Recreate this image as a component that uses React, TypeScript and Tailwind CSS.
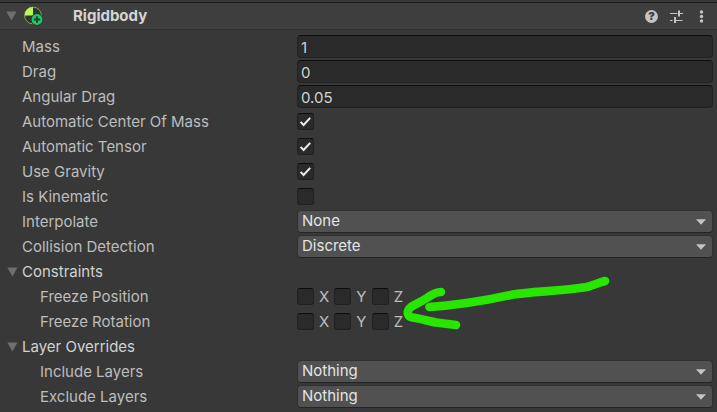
import { useId, useState, type ReactNode } from "react";

function Foldout({ className }: { className?: string }) {
  return (
    <svg width="11" height="10" viewBox="0 0 11 10" className={className} aria-hidden="true">
      <path d="M0.3 0.5h10.2L5.4 9.6z" fill="#6f6f6f" />
    </svg>
  );
}

function Row({ label, indent, children }: { label: string; indent?: boolean; children: (id: string) => ReactNode }) {
  const id = useId();
  return (
    <div className="flex h-[25px] items-center pr-1">
      <label htmlFor={id} className={`w-[297px] shrink-0 ${indent ? "pl-10" : "pl-[22px]"}`}>
        {label}
      </label>
      {children(id)}
    </div>
  );
}

function NumberRow({ label, value }: { label: string; value: string }) {
  return (
    <Row label={label}>
      {(id) => (
        <input
          id={id}
          type="text"
          inputMode="decimal"
          defaultValue={value}
          className="h-[23px] min-w-0 flex-1 rounded-[4px] border border-[#212121] border-t-[#0d0d0d] bg-[#2a2a2a] px-[3px] pt-0.5 text-[#d2d2d2] outline-none"
        />
      )}
    </Row>
  );
}

function Checkbox({ id, checked = false }: { id: string; checked?: boolean }) {
  const [on, setOn] = useState(checked);
  return (
    <span className="relative flex size-[17px] shrink-0">
      <input
        id={id}
        type="checkbox"
        checked={on}
        onChange={() => setOn(!on)}
        className="size-[17px] appearance-none rounded-[3px] border border-[#212121] border-t-[#0d0d0d] bg-[#2a2a2a]"
      />
      {on && (
        <svg viewBox="0 0 17 17" className="pointer-events-none absolute inset-0 size-[17px]" aria-hidden="true">
          <path d="M3.6 8.9l3 3.1L13.2 4.900" fill="none" stroke="#ececec" strokeWidth="2" />
        </svg>
      )}
    </span>
  );
}

function ToggleRow({ label, checked }: { label: string; checked?: boolean }) {
  return <Row label={label}>{(id) => <Checkbox id={id} checked={checked} />}</Row>;
}

function SelectRow({ label, options, indent }: { label: string; options: string[]; indent?: boolean }) {
  return (
    <Row label={label} indent={indent}>
      {(id) => (
        <div className="relative flex min-w-0 flex-1">
          <select
            id={id}
            className="h-[23px] w-full appearance-none rounded-[4px] border border-[#303030] border-b-[#242424] bg-[#515151] pr-6 pb-0.5 pl-1 text-[#e4e4e4] outline-none"
          >
            {options.map((o) => (
              <option key={o}>{o}</option>
            ))}
          </select>
          <svg width="10" height="6" viewBox="0 0 10 6" className="pointer-events-none absolute top-[9px] right-[7px]" aria-hidden="true">
            <path d="M0 0.3h10L5 5.8z" fill="#c4c4c4" />
          </svg>
        </div>
      )}
    </Row>
  );
}

function AxisRow({ label }: { label: string }) {
  const id = useId();
  return (
    <div role="group" aria-labelledby={id} className="flex h-[25px] items-center">
      <span id={id} className="w-[297px] shrink-0 pl-10">
        {label}
      </span>
      <div className="grid w-[112px] grid-cols-3">
        {["X", "Y", "Z"].map((axis) => (
          <div key={axis} className="flex items-center gap-[5px]">
            <Checkbox id={id + axis} />
            <label htmlFor={id + axis}>{axis}</label>
          </div>
        ))}
      </div>
    </div>
  );
}

function Section({ title, children }: { title: string; children: ReactNode }) {
  const [open, setOpen] = useState(true);
  return (
    <section>
      <button type="button" aria-expanded={open} onClick={() => setOpen(!open)} className="flex h-[25px] w-full items-center gap-1 pl-[7px] text-left text-[#d2d2d2]">
        <Foldout />
        {title}
      </button>
      {open && children}
    </section>
  );
}

function Header() {
  return (
    <header className="flex h-7 items-center border-t border-b border-t-[#1a1a1a] border-b-[#303030] bg-[#3e3e3e] pr-[9px] pl-1.5">
      <button type="button" aria-label="Collapse Rigidbody">
        <Foldout />
      </button>
      <svg width="20" height="20" viewBox="0 0 20 20" className="ml-[7px]" aria-hidden="true">
        <circle cx="9" cy="9.500" r="8.4" fill="#30352b" stroke="#84a550" strokeWidth="1" />
        <path d="M9 9.500V1.100A8.400 8.400 0 0 0 0.600 9.500z" fill="#b5fb58" />
        <path d="M9 9.500h8.400A8.400 8.400 0 0 1 9 17.900z" fill="#71b440" />
        <circle cx="13" cy="13.500" r="6.200" fill="#303a34" />
        <circle cx="13" cy="13.500" r="5.400" fill="#1fc76a" />
        <path d="M13 10.300v6.400M9.800 13.500h6.400" stroke="#17422b" strokeWidth="1.800" />
      </svg>
      <h1 className="ml-[29px] flex-1 font-bold text-[#d4d4d4]">Rigidbody</h1>
      <div className="flex items-center gap-3">
        <button type="button" aria-label="Help" className="flex size-[13px] items-center justify-center rounded-full bg-[#c4c4c4] text-[11px] leading-none font-black text-[#3e3e3e]">
          ?
        </button>
        <button type="button" aria-label="Presets">
          <svg width="13" height="13" viewBox="0 0 13 13" fill="none" stroke="#c4c4c4" aria-hidden="true">
            <path d="M0 3.5h7.5M10 3.5h3M0 10.5h2.5M5.5 10.5h7" strokeWidth="1.2" />
            <path d="M9 0.5v6M5 7v6" strokeWidth="2" />
          </svg>
        </button>
        <button type="button" aria-label="More options">
          <svg width="13" height="13" viewBox="0 0 13 13" fill="#c4c4c4" aria-hidden="true">
            <circle cx="6.5" cy="2" r="1.7" />
            <circle cx="6.5" cy="6.5" r="1.7" />
            <circle cx="6.5" cy="11" r="1.7" />
          </svg>
        </button>
      </div>
    </header>
  );
}

export default function App() {
  return (
    <main className="min-h-screen bg-[#383838] pt-0.5 font-['Inter','Liberation_Sans',sans-serif] text-[15px] leading-5 text-[#bdbdbd]">
      <Header />
      <div className="pt-1">
        <NumberRow label="Mass" value="1" />
        <NumberRow label="Drag" value="0" />
        <NumberRow label="Angular Drag" value="0.05" />
        <ToggleRow label="Automatic Center Of Mass" checked />
        <ToggleRow label="Automatic Tensor" checked />
        <ToggleRow label="Use Gravity" checked />
        <ToggleRow label="Is Kinematic" />
        <SelectRow label="Interpolate" options={["None", "Interpolate", "Extrapolate"]} />
        <SelectRow label="Collision Detection" options={["Discrete", "Continuous", "Continuous Dynamic"]} />
        <Section title="Constraints">
          <div className="relative">
            <AxisRow label="Freeze Position" />
            <AxisRow label="Freeze Rotation" />
            <svg width="216" height="60" viewBox="400 274 216 60" className="pointer-events-none absolute -top-2.5 left-[400px]" fill="none" stroke="#28e600" strokeWidth="8.6" strokeLinecap="round" strokeLinejoin="round" aria-hidden="true">
              <path d="M429.5 307C460 305 486 300.500 513 294.500C532 291.500 562 291 587 287C594 285 599 282.500 605 281" />
              <path d="M441 292C435 292 431 295 427 298C420 302.500 415 304 411 307C406 311 407 316 412 317.500C418 318 428 321 436 322.500L456 325" />
            </svg>
          </div>
        </Section>
        <Section title="Layer Overrides">
          <SelectRow label="Include Layers" options={["Nothing", "Everything", "Default"]} indent />
          <SelectRow label="Exclude Layers" options={["Nothing", "Everything", "Default"]} indent />
        </Section>
      </div>
    </main>
  );
}
